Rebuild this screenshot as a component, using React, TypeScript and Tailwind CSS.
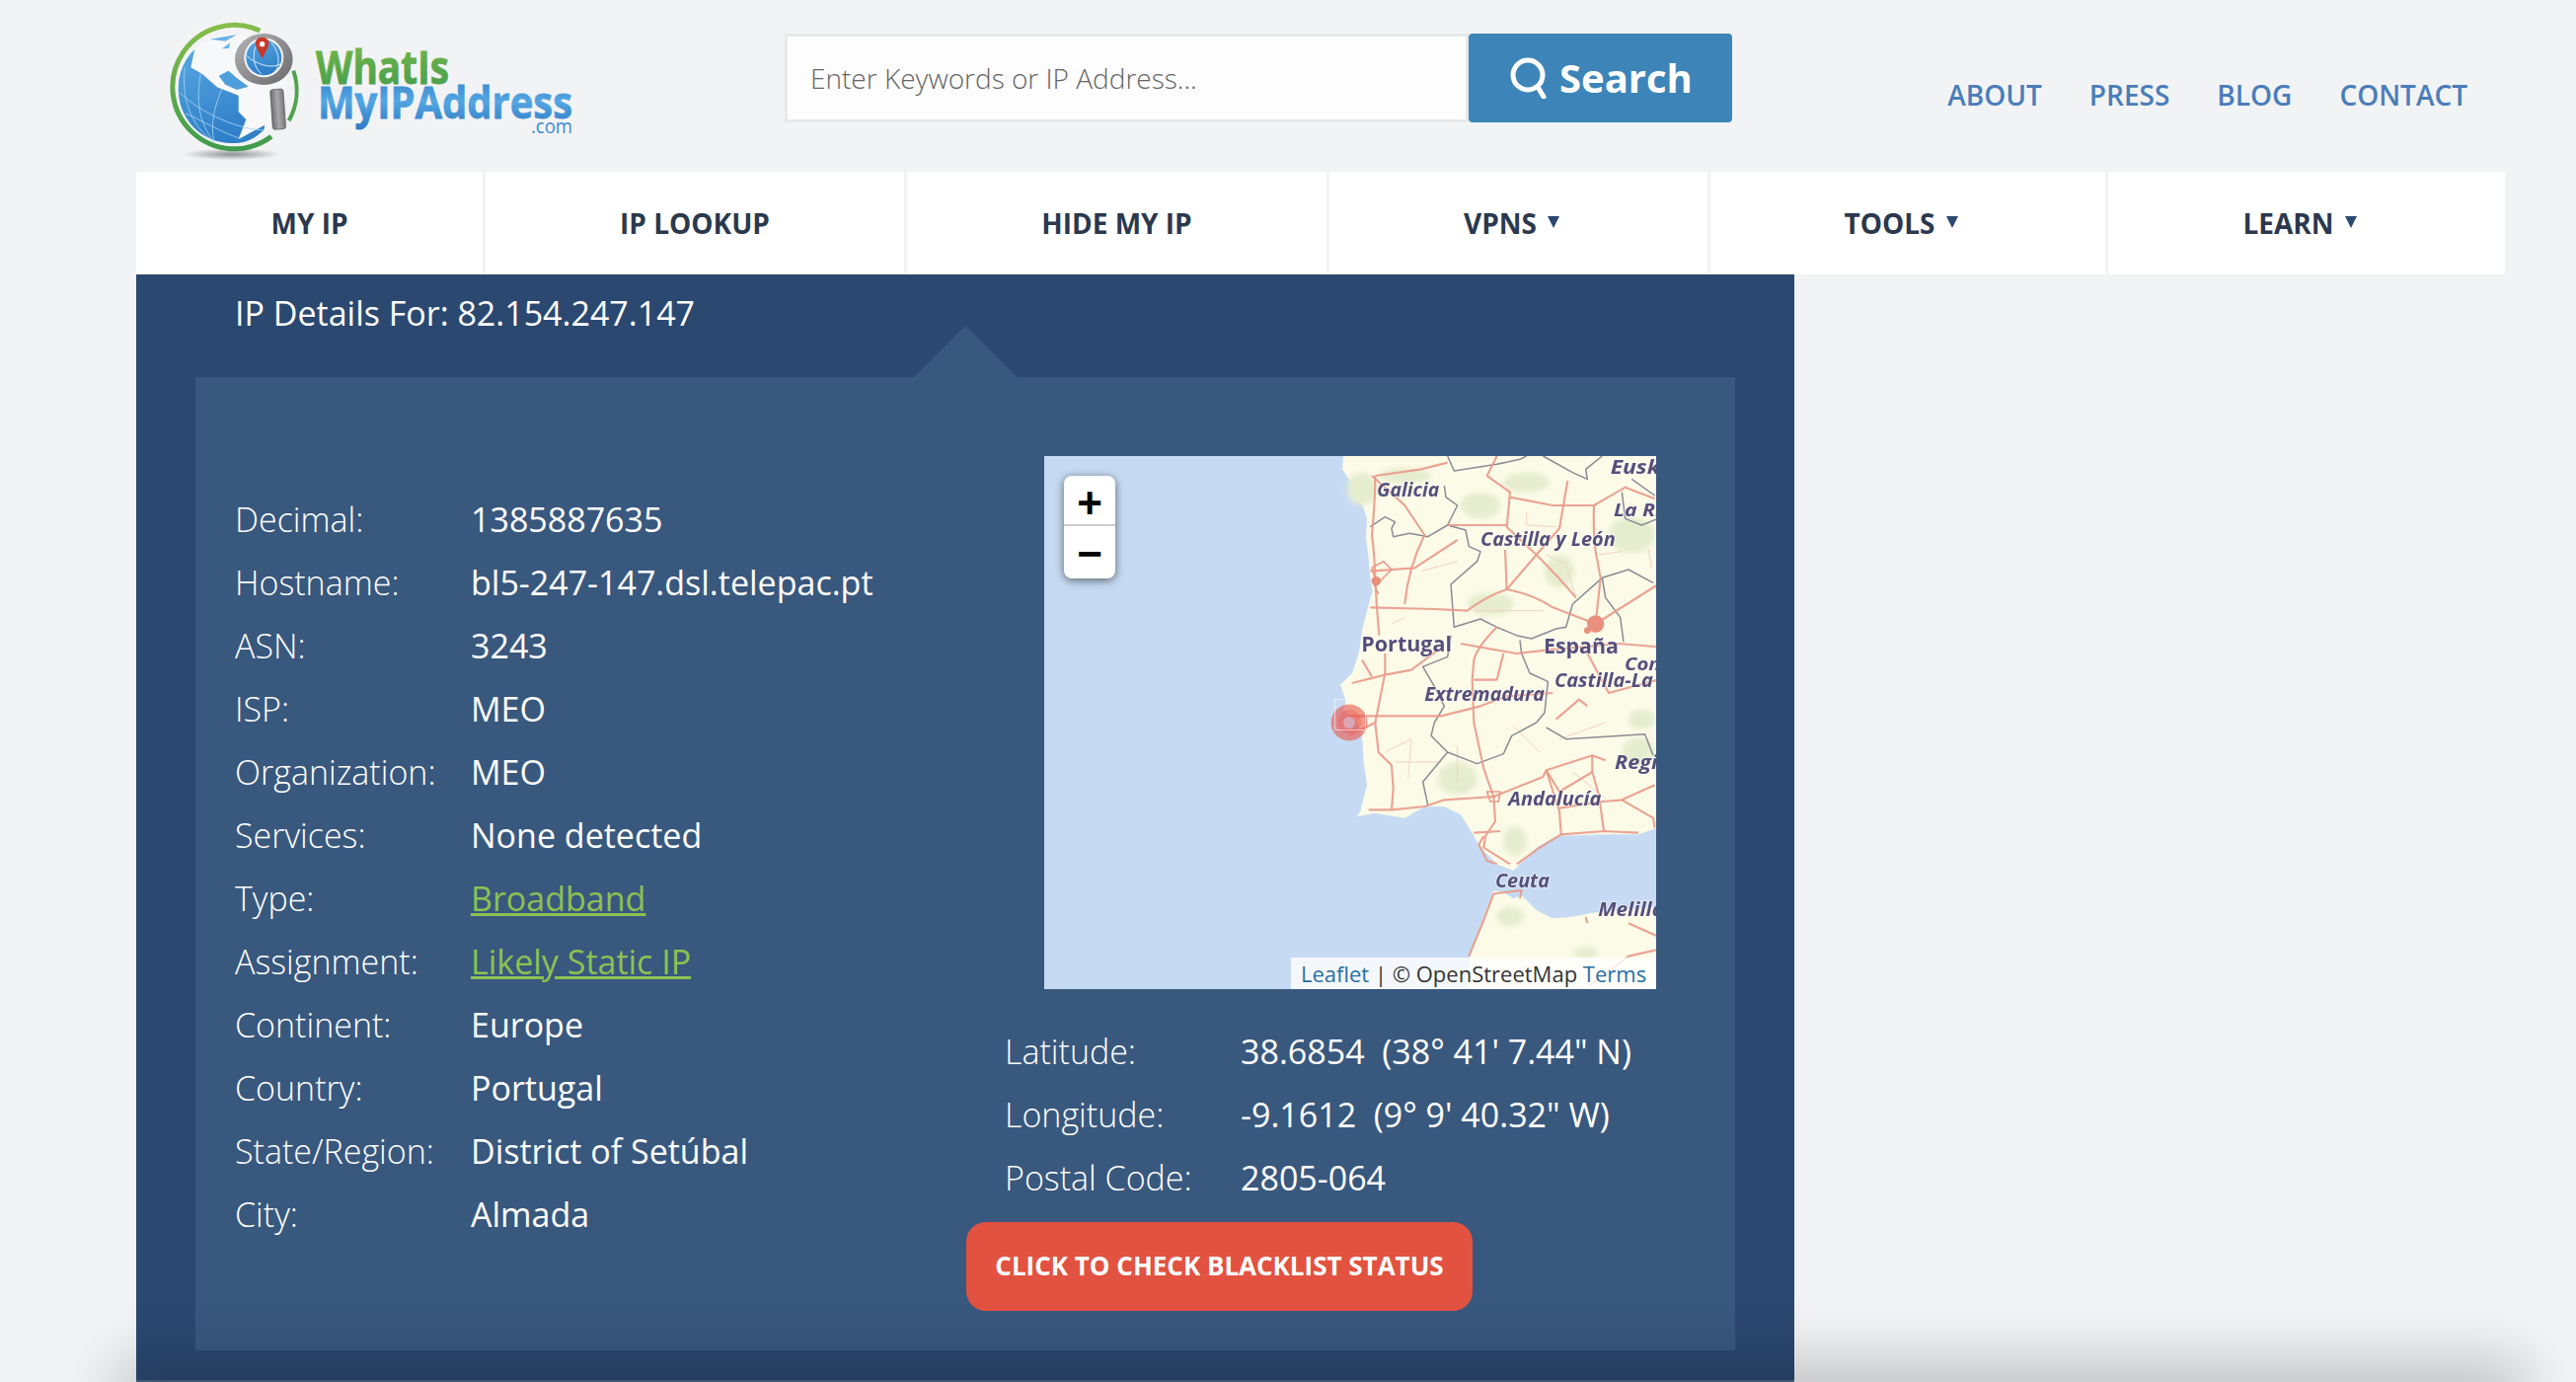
const OPEN = "font-['Open_Sans',sans-serif]";

function Logo() {
  return (
    <svg width="430" height="155" viewBox="0 0 430 155" className="block">
      <defs>
        <linearGradient id="ring" x1="0" y1="0" x2="0" y2="1">
          <stop offset="0" stopColor="#86bd4a" />
          <stop offset="1" stopColor="#3f9c4c" />
        </linearGradient>
        <linearGradient id="ocean" x1="0" y1="0" x2="0.3" y2="1">
          <stop offset="0" stopColor="#58a8e2" />
          <stop offset="1" stopColor="#2f7fc9" />
        </linearGradient>
        <linearGradient id="metal" x1="0" y1="0" x2="1" y2="1">
          <stop offset="0" stopColor="#b4b4b6" />
          <stop offset="1" stopColor="#69696b" />
        </linearGradient>
        <linearGradient id="handle" x1="0" y1="0" x2="1" y2="0">
          <stop offset="0" stopColor="#6e6e70" />
          <stop offset="0.5" stopColor="#a8a8aa" />
          <stop offset="1" stopColor="#7a7a7c" />
        </linearGradient>
        <linearGradient id="what" x1="0" y1="0" x2="0" y2="1">
          <stop offset="0" stopColor="#7cb84a" />
          <stop offset="1" stopColor="#3f9b4c" />
        </linearGradient>
        <linearGradient id="my" x1="0" y1="0" x2="0" y2="1">
          <stop offset="0" stopColor="#2f7cc6" />
          <stop offset="0.5" stopColor="#53a6e2" />
          <stop offset="1" stopColor="#2c76c2" />
        </linearGradient>
        <radialGradient id="shade">
          <stop offset="0" stopColor="#000" stopOpacity="0.4" />
          <stop offset="1" stopColor="#000" stopOpacity="0" />
        </radialGradient>
      </defs>
      <g transform="scale(0.3333)">
        <ellipse cx="225" cy="424" rx="150" ry="18" fill="url(#shade)" />
        <path d="M310 48 A188 188 0 1 0 345 370" fill="none" stroke="url(#ring)" strokeWidth="15" />
        <path d="M412 170 A188 188 0 0 1 398 322" fill="none" stroke="#4fa24c" strokeWidth="12" />
        <circle cx="225" cy="225" r="165" fill="#f7f8fa" />
        <path d="M62 225 C62 170 85 130 112 105 L100 160 L135 180 L180 220 L245 245 L245 295 L268 318 L245 378 L325 335 L322 350 C285 385 255 392 225 390 C130 390 62 315 62 225 Z" fill="url(#ocean)" />
        <path d="M185 185 L215 170 L240 192 L275 218 L240 228 L205 212 Z" fill="#4d9fdd" />
        <path d="M158 74 L240 60 L205 80 Z M195 103 L220 85 L216 102 Z" fill="#68b2e6" />
        <path d="M82 160 C70 250 100 340 170 385 M130 180 C115 260 125 330 170 385 M195 225 C170 280 160 340 170 380 M65 235 C130 300 250 350 320 350 M85 300 C130 320 220 370 250 375" fill="none" stroke="#a6d2f2" strokeWidth="2.5" />
        <ellipse cx="322" cy="135" rx="88" ry="78" fill="url(#metal)" />
        <circle cx="322" cy="130" r="60" fill="#f4f5f7" />
        <circle cx="322" cy="130" r="54" fill="url(#ocean)" />
        <path d="M270 125 C300 150 340 165 372 150 M300 90 C285 120 290 160 315 180 M345 85 C375 120 370 160 350 178" fill="none" stroke="#d4e9f8" strokeWidth="3" />
        <path d="M317 68 C334 68 341 82 336 95 C332 106 322 122 317 133 C312 122 302 106 298 95 C293 82 300 68 317 68 Z" fill="#c8392b" />
        <circle cx="317" cy="89" r="8" fill="#fff" />
        <rect x="345" y="226" width="40" height="122" rx="8" fill="url(#handle)" stroke="#57575a" strokeWidth="2" transform="rotate(-4 365 287)" />
      </g>
      <text x="160" y="70" textLength="135" lengthAdjust="spacingAndGlyphs" fill="url(#what)" stroke="url(#what)" strokeWidth="0.8" fontFamily="Open Sans, sans-serif" fontWeight="700" fontSize="46">WhatIs</text>
      <text x="162" y="105" textLength="258" lengthAdjust="spacingAndGlyphs" fill="url(#my)" stroke="url(#my)" strokeWidth="0.8" fontFamily="Open Sans, sans-serif" fontWeight="700" fontSize="45">MyIPAddress</text>
      <text x="378" y="120" textLength="42" lengthAdjust="spacingAndGlyphs" fill="#3b8bd2" fontFamily="Open Sans, sans-serif" fontWeight="400" fontSize="20">.com</text>
    </svg>
  );
}

function Caret() {
  return (
    <svg width="12" height="12" viewBox="0 0 12 12" className="ml-[11px] mr-[14px] mb-[2px] shrink-0">
      <path d="M0 0 H12 L6 12 Z" fill="#2b4870" />
    </svg>
  );
}

function NavItem({ label, w, caret, last }: { label: string; w: string; caret?: boolean; last?: boolean }) {
  return (
    <div className={`${w} ${last ? "" : "border-r-[3px] border-[#f2f3f5]"} bg-white flex items-center justify-center text-[28px] font-bold text-[#2b384d]`}>
      <span>{label}</span>
      {caret && <Caret />}
    </div>
  );
}

function Row({ label, value, link, lw }: { label: string; value: string; link?: boolean; lw: string }) {
  return (
    <div className="flex items-center h-[64px] text-[34px] text-white">
      <span className={`${lw} shrink-0 font-light`}>{label}</span>
      {link ? <span className="text-[#8cc152] underline">{value}</span> : <span className="whitespace-pre">{value}</span>}
    </div>
  );
}

function MapArt() {
  const land = "#fbfbe8";
  const road = "#ea9a8a";
  const border = "#8b8b95";
  const majorRoads = [
    "M100 60 Q100 120 95 180 L90 240 Q98 300 100 370 L105 460 L112 545",
    "M85 460 L280 465 L380 470 Q440 425 500 405 Q580 420 640 460 L770 510",
    "M500 405 L495 285",
    "M500 405 L590 300 Q660 370 710 430",
    "M590 300 L500 215 L510 110 L440 60 L470 0",
    "M510 125 L640 150 L765 150 L860 95 L950 130",
    "M765 150 Q762 230 770 290 L785 370 L770 510",
    "M685 75 L660 220 L590 300",
    "M320 210 L500 210",
    "M100 60 L240 40 L320 20",
    "M90 60 L190 150 L250 240 Q200 340 190 450",
    "M85 350 L220 340 L350 255",
    "M360 570 L530 600 L620 590 L840 570 L960 580",
    "M470 520 Q410 580 400 620 L395 680 L400 810",
    "M770 510 L960 390",
    "M740 590 L810 720 L960 680",
    "M650 800 L720 740 L745 760",
    "M30 690 L130 665 L210 650 L290 590",
    "M60 620 L90 670 M130 600 L130 660 L100 810",
    "M20 790 L300 790 L420 760 L500 730 L640 720",
    "M400 680 L470 680 L490 600",
    "M100 810 L110 900 L150 940 L155 1010 L150 1075",
    "M80 1075 L150 1075 L250 1065 L310 1045 L460 1035 L610 975 L620 955 L760 910 L800 925",
    "M400 810 L430 950 L460 1035 L465 1110 L435 1155 L430 1190 L510 1240",
    "M620 955 L660 1080 L665 1150 L600 1190 L530 1240",
    "M760 910 L760 960 L780 1030 L795 1140",
    "M660 1070 L790 1050 L850 1045 L950 1000",
    "M850 1045 L945 1100 L950 1130",
    "M760 960 L660 1020 L620 955",
    "M665 1150 L795 1140 L900 1145",
    "M400 1145 L480 1140 M430 1155 L415 1180 L440 1230 L470 1240",
    "M460 1330 L430 1410 L385 1520",
    "M460 1330 L545 1320 L540 1345",
    "M960 1500 L870 1520 L750 1610",
    "M870 1420 L960 1460",
    "M740 1400 L745 1420",
    "M20 850 L100 810",
  ];
  const minorRoads = [
    "M150 510 L190 490 M240 350 L350 320 M400 470 L610 470 M560 170 L560 210 L650 215",
    "M620 300 L680 330 L710 430 M850 290 L780 300 M930 280 L940 340",
    "M130 900 L210 860 L200 980 M160 930 L300 930 M350 880 L350 990",
    "M520 820 L600 900 M660 860 L800 810 M800 1040 L700 960",
  ];
  const borders = [
    "M320 0 L340 45 L470 25 L540 10 L560 0",
    "M610 0 L700 50 L745 70 L740 40 L790 0",
    "M310 90 L315 125 L350 150 L320 210 L260 245 L205 235 L155 245 L150 220 L160 200 L130 185 L85 215",
    "M320 210 L375 225 L385 275 L420 290 L410 320 L330 390 L340 520 L420 495 L470 520 L530 545 L575 555 L650 525 L680 520 L700 450 L790 370 L870 345 L945 385",
    "M790 370 L800 430 L845 490 L855 565",
    "M540 560 L545 600 L570 660 L625 685 L615 780 L590 810",
    "M330 545 L320 610 L245 640 L280 700 L310 760 L280 810",
    "M280 810 L270 850 L320 900 L410 935 L490 905 L515 850 L590 810",
    "M620 825 L680 860 L920 845 L945 910",
    "M320 900 L245 990 L260 1060",
    "M850 110 L860 190 L910 210 L960 190",
    "M880 70 L950 120",
  ];
  const labels: [string, number, number, number, number][] = [
    ["Galicia", 105, 122, 190, 56],
    ["Eusk", 815, 55, 150, 56],
    ["La Ri", 825, 182, 145, 54],
    ["Castilla y León", 420, 272, 410, 56],
    ["Portugal", 58, 595, 275, 64],
    ["España", 612, 600, 228, 64],
    ["Con", 858, 652, 110, 54],
    ["Castilla-La", 645, 702, 300, 56],
    ["Extremadura", 250, 745, 365, 56],
    ["Regi", 828, 950, 130, 56],
    ["Andalucía", 505, 1062, 282, 56],
    ["Ceuta", 465, 1312, 165, 56],
    ["Melilla", 778, 1398, 200, 56],
  ];
  return (
    <svg viewBox="0 0 620 540" width="620" height="540" className="block">
      <defs>
        <filter id="soft"><feGaussianBlur stdDeviation="0.8" /></filter>
        <filter id="soft2"><feGaussianBlur stdDeviation="8" /></filter>
        <filter id="soft3"><feGaussianBlur stdDeviation="0.35" /></filter>
      </defs>
      <rect width="620" height="540" fill="#c6dbf3" />
      <g transform="translate(302 0) scale(0.33333)">
        <g filter="url(#soft)">
          <path fill={land} d="M4 0 L0 40 L20 70 L45 105 L62 150 L75 190 L72 250 L80 310 L85 370 L92 410 L75 470 L60 530 L50 600 L30 660 L-6 696 L10 740 L5 775 L40 800 L60 840 L65 930 L75 1000 L55 1080 L45 1095 L100 1085 L190 1100 L250 1065 L310 1065 L360 1090 L395 1145 L420 1190 L470 1240 L520 1260 L540 1240 L590 1190 L650 1155 L790 1150 L900 1150 L960 1130 L960 0 Z" />
          <path fill={land} d="M380 1620 L390 1510 L430 1400 L460 1320 L490 1325 L520 1345 L545 1335 L560 1350 L590 1380 L640 1405 L700 1400 L750 1390 L780 1385 L960 1370 L960 1620 Z" />
        </g>
        <g filter="url(#soft2)" fill="#e6edcf">
          <ellipse cx="60" cy="100" rx="45" ry="50" />
          <ellipse cx="190" cy="60" rx="80" ry="24" />
          <ellipse cx="420" cy="150" rx="60" ry="40" />
          <ellipse cx="660" cy="350" rx="45" ry="50" />
          <ellipse cx="880" cy="240" rx="70" ry="55" />
          <ellipse cx="560" cy="80" rx="70" ry="30" />
          <ellipse cx="450" cy="450" rx="70" ry="35" />
          <ellipse cx="350" cy="980" rx="60" ry="50" />
          <ellipse cx="525" cy="1170" rx="35" ry="45" />
          <ellipse cx="900" cy="900" rx="50" ry="45" />
          <ellipse cx="510" cy="1400" rx="40" ry="30" />
          <ellipse cx="740" cy="1510" rx="35" ry="20" />
          <ellipse cx="910" cy="800" rx="40" ry="30" />
        </g>
        <g filter="url(#soft)" fill="none" strokeLinejoin="round">
          {minorRoads.map((d, i) => <path key={i} d={d} stroke="#f1d2bf" strokeWidth="3" />)}
          {borders.map((d, i) => <path key={i} d={d} stroke={border} strokeWidth="4.5" />)}
          {majorRoads.map((d, i) => <path key={i} d={d} stroke={road} strokeWidth="6.5" strokeOpacity="0.9" />)}
          <path d="M90 340 L125 320 L150 345 L105 390 Z M90 375 L110 420" stroke={road} strokeWidth="5" />
          <path d="M440 1020 L480 1020 L475 1050 L450 1050 Z" stroke={road} strokeWidth="5" />
        </g>
        <g filter="url(#soft)" fill="#ea8f7e">
          <circle cx="770" cy="510" r="26" />
          <circle cx="745" cy="530" r="10" />
          <circle cx="103" cy="380" r="14" />
        </g>
        <g filter="url(#soft3)">
          {labels.map(([t, x, y, w, s]) => (
            <text key={t} x={x} y={y} textLength={w} lengthAdjust="spacingAndGlyphs" fontFamily="Open Sans, sans-serif" fontWeight="700" fontStyle={t === "Portugal" || t === "España" ? "normal" : "italic"} fontSize={s} fill="#56507a" stroke="#ffffff" strokeOpacity="0.6" strokeWidth="5" paintOrder="stroke">
              {t}
            </text>
          ))}
        </g>
      </g>
      <circle cx="309" cy="270" r="18.5" fill="#ea5a50" fillOpacity="0.62" />
      <circle cx="309" cy="269" r="12" fill="#ea5a50" fillOpacity="0.35" />
      <circle cx="309" cy="270" r="6" fill="#d9a7b5" />
      <rect x="294.5" y="246.5" width="31" height="31" fill="none" stroke="#ffffff" strokeOpacity="0.55" />
    </svg>
  );
}

export default function App() {
  return (
    <div className={`relative w-full h-[1400px] overflow-hidden bg-[#f2f3f5] pl-[138px] pr-[72px] ${OPEN}`}>
      <header className="flex h-[174px]">
        <div className="w-[657px] pl-[22px] pt-[15px] shrink-0"><Logo /></div>
        <div className="flex h-[90px] mt-[34px] shrink-0">
          <div className="w-[693px] border-[3px] border-[#e7e8e8] bg-[#fdfdfd] flex items-center pl-[23px] text-[28px] font-light text-[#666]">
            Enter Keywords or IP Address...
          </div>
          <div className="w-[267px] bg-[#3d85b8] rounded-r-[4px] rounded-l-[4px] flex items-center pl-[42px] text-white text-[40px] font-bold">
            <svg width="38" height="42" viewBox="0 0 38 42" className="mr-[12px]">
              <circle cx="18" cy="18" r="15" fill="none" stroke="#fff" strokeWidth="5" />
              <path d="M28 30 L34 40" stroke="#fff" strokeWidth="5" strokeLinecap="round" />
            </svg>
            Search
          </div>
        </div>
        <nav className="ml-auto mr-[38px] mt-[76px] h-[40px] flex items-center gap-[48px] text-[28px] font-semibold text-[#4a7db9]">
          <span>ABOUT</span>
          <span>PRESS</span>
          <span>BLOG</span>
          <span>CONTACT</span>
        </nav>
      </header>

      <div className="flex h-[104px]">
        <NavItem label="MY IP" w="w-[354px]" />
        <NavItem label="IP LOOKUP" w="w-[427px]" />
        <NavItem label="HIDE MY IP" w="w-[428px]" />
        <NavItem label="VPNS" w="w-[386px]" caret />
        <NavItem label="TOOLS" w="w-[403px]" caret />
        <NavItem label="LEARN" w="w-[402px]" caret last />
      </div>

      <main className="w-[1680px] h-[1122px] bg-[#2b4870] flex flex-col">
        <div className="h-[78px] pl-[100px] flex items-center text-[34px] text-white">IP Details For: 82.154.247.147</div>
        <div className="relative mx-[60px] mt-[26px] h-[986px] bg-[#39587e] flex">
          <div className="absolute left-[728px] top-[-52px] w-[104px] h-[52px] bg-[#39587e] [clip-path:polygon(50%_0,100%_100%,0_100%)]" />
          <div className="w-[781px] shrink-0 pl-[40px] pt-[112px]">
            <Row lw="w-[239px]" label="Decimal:" value="1385887635" />
            <Row lw="w-[239px]" label="Hostname:" value="bl5-247-147.dsl.telepac.pt" />
            <Row lw="w-[239px]" label="ASN:" value="3243" />
            <Row lw="w-[239px]" label="ISP:" value="MEO" />
            <Row lw="w-[239px]" label="Organization:" value="MEO" />
            <Row lw="w-[239px]" label="Services:" value="None detected" />
            <Row lw="w-[239px]" label="Type:" value="Broadband" link />
            <Row lw="w-[239px]" label="Assignment:" value="Likely Static IP" link />
            <Row lw="w-[239px]" label="Continent:" value="Europe" />
            <Row lw="w-[239px]" label="Country:" value="Portugal" />
            <Row lw="w-[239px]" label="State/Region:" value="District of Setúbal" />
            <Row lw="w-[239px]" label="City:" value="Almada" />
          </div>
          <div className="flex-1 pt-[80px]">
            <div className="relative ml-[79px] w-[620px] h-[540px] overflow-hidden">
              <MapArt />
              <div className="absolute left-[20px] top-[20px] w-[52px] h-[104px] rounded-[8px] bg-white shadow-[0_2px_10px_rgba(0,0,0,0.55)] flex flex-col text-black font-bold font-['Liberation_Sans',sans-serif]">
                <div className="h-[51px] pt-[6px] border-b-2 border-[#ccc] flex items-center justify-center text-[44px] leading-none">+</div>
                <div className="flex-1 pt-[3px] flex items-center justify-center text-[44px] leading-none">−</div>
              </div>
              <div className="absolute right-0 bottom-0 h-[32px] w-[370px] bg-white/80 flex items-center pl-[10px] text-[22px] text-[#333] whitespace-pre">
                <span className="text-[#2a6fa3]">Leaflet</span>
                <span> | © OpenStreetMap </span>
                <span className="text-[#2a6fa3]">Terms</span>
              </div>
            </div>
            <div className="ml-[39px] mt-[31px]">
              <Row lw="w-[239px]" label="Latitude:" value="38.6854  (38° 41' 7.44&quot; N)" />
              <Row lw="w-[239px]" label="Longitude:" value="-9.1612  (9° 9' 40.32&quot; W)" />
              <Row lw="w-[239px]" label="Postal Code:" value="2805-064" />
            </div>
            <div className="mt-[13px] w-[513px] h-[90px] rounded-[20px] bg-[#e25240] flex items-center justify-center text-[26px] font-bold text-white pb-[2px]">
              CLICK TO CHECK BLACKLIST STATUS
            </div>
          </div>
        </div>
        <div className="mt-auto h-[2px] bg-[#4c6686]" />
      </main>

      <div className="absolute left-[138px] top-[1400px] w-[2400px] h-[20px] shadow-[0_0_60px_20px_rgba(0,0,0,0.22)]" />
    </div>
  );
}
